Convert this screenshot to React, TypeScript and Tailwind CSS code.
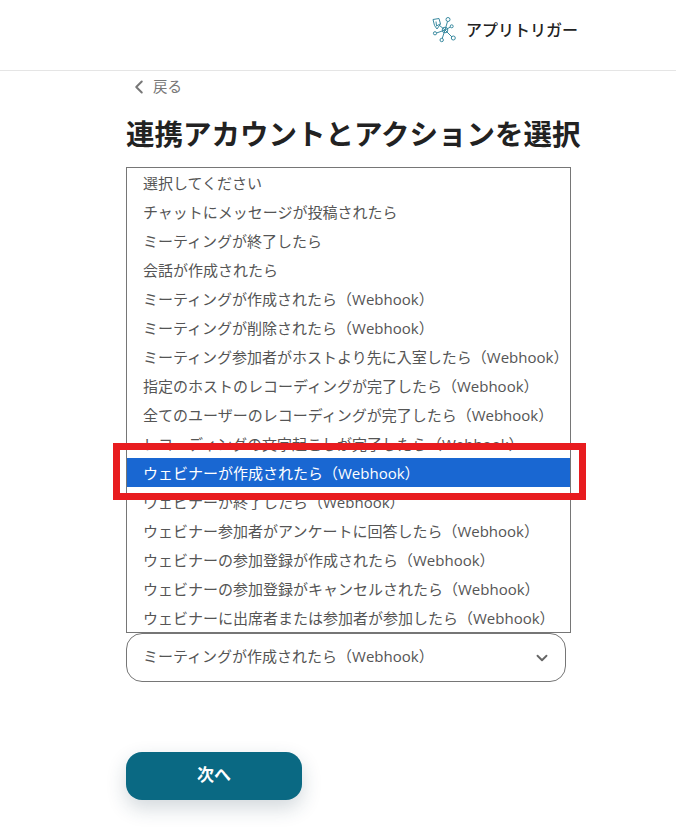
import { ChevronDown, ChevronLeft } from 'lucide-react'

const options = [
  '選択してください',
  'チャットにメッセージが投稿されたら',
  'ミーティングが終了したら',
  '会話が作成されたら',
  'ミーティングが作成されたら（Webhook）',
  'ミーティングが削除されたら（Webhook）',
  'ミーティング参加者がホストより先に入室したら（Webhook）',
  '指定のホストのレコーディングが完了したら（Webhook）',
  '全てのユーザーのレコーディングが完了したら（Webhook）',
  'レコーディングの文字起こしが完了したら（Webhook）',
  'ウェビナーが作成されたら（Webhook）',
  'ウェビナーが終了したら（Webhook）',
  'ウェビナー参加者がアンケートに回答したら（Webhook）',
  'ウェビナーの参加登録が作成されたら（Webhook）',
  'ウェビナーの参加登録がキャンセルされたら（Webhook）',
  'ウェビナーに出席者または参加者が参加したら（Webhook）',
]

function Logo() {
  return (
    <svg width="24" height="26" viewBox="0 0 24 26" fill="none" stroke="#3a8aa0" strokeWidth="1">
      <path d="M13 13 L7 8 M13 13 L15.5 4.5 M13 13 L18.5 10 M13 13 L20 20 M13 13 L10.2 21.5 M13 13 L4.5 16" />
      <circle cx="13" cy="13" r="2.8" />
      <circle cx="16" cy="2.5" r="2" />
      <circle cx="19.7" cy="9.3" r="1.5" />
      <circle cx="21.3" cy="21" r="2" />
      <circle cx="9.7" cy="23" r="1.7" />
      <circle cx="3" cy="16.3" r="1.6" />
      <path d="M1 2.5 L7 1.5 L8.5 7 L5 12 L2.5 8.5 Z M4 4.5 L4.5 9 L8 7" />
    </svg>
  )
}

export default function App() {
  return (
    <div className="min-h-[828px] bg-white font-['Open_Sans','Noto_Sans_CJK_JP',sans-serif]">
      <header className="flex h-[71px] items-center justify-end gap-[10px] border-b border-[#e5e5e5] pr-[98px] pb-[10px]">
        <Logo />
        <span className="text-[16px] font-medium text-[#222222]">アプリトリガー</span>
      </header>

      <main className="pl-[126px]">
        <div className="flex h-[32px] items-center gap-[3px] pl-[2px] text-[14.5px] text-[#777777]">
          <ChevronLeft size={22} strokeWidth={2.2} />
          <span>戻る</span>
        </div>

        <h1 className="mt-[7px] h-[57px] text-[28.5px] leading-[48px] font-bold whitespace-nowrap text-[#222222]">
          連携アカウントとアクションを選択
        </h1>

        <div className="relative w-[445px]">
          <ul className="h-[466px] overflow-hidden border border-[#767676]">
            {options.map((option, i) => (
              <li
                key={option}
                className={
                  i === 10
                    ? 'flex h-[29px] items-center bg-[#1967d2] pt-[2px] pl-[16px] text-[15px] whitespace-nowrap text-white'
                    : 'flex h-[29px] items-center pt-[2px] pl-[16px] text-[15px] whitespace-nowrap text-[#555555]'
                }
              >
                {option}
              </li>
            ))}
          </ul>
          <div className="absolute top-[276px] -left-[13px] h-[57px] w-[473px] border-[7px] border-[#e81c1f]" />
        </div>

        <div className="flex h-[49px] w-[440px] items-center justify-between rounded-[16px] border border-[#767676] pr-[14px] pb-[2px] pl-[16px] text-[15px] text-[#555555]">
          <span>ミーティングが作成されたら（Webhook）</span>
          <ChevronDown size={18} strokeWidth={2.5} className="mt-[3px] text-[#666666]" />
        </div>

        <button className="mt-[70px] h-[48px] w-[176px] rounded-[16px] bg-[#0a6983] pb-[2px] text-[17px] font-bold text-white shadow-[0_8px_20px_rgba(30,60,80,0.2)]">
          次へ
        </button>
      </main>
    </div>
  )
}
